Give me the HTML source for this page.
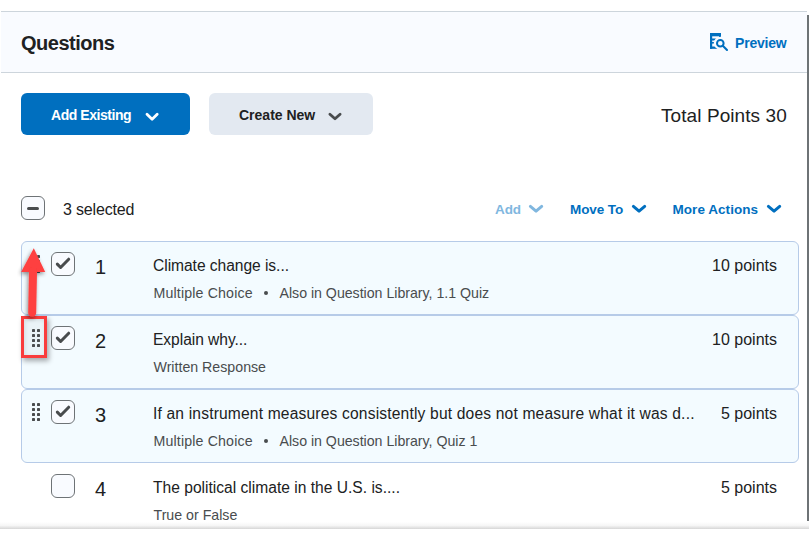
<!DOCTYPE html>
<html><head><meta charset="utf-8"><style>
*{margin:0;padding:0;box-sizing:border-box}
html,body{width:809px;height:536px;overflow:hidden;background:#fff;font-family:"Liberation Sans",sans-serif;color:#202122}
.a{position:absolute;display:block}
.t{position:absolute;white-space:nowrap;line-height:1}
.cb{position:absolute;width:24px;height:24px;border:1.5px solid #6e7376;border-radius:6px;background:#f9fbff}
.card{position:absolute;left:21px;width:778px;height:74px;background:#f3fbff;border:1px solid #b6cbe8;border-radius:6px}
</style></head><body>
<div class="a" style="left:1px;top:11px;width:806px;height:62px;background:#f9fbff;border-top:1px solid #cdd5dc;border-bottom:1px solid #cdd5dc"></div>
<div class="t" style="left:21px;top:32.57px;font-size:20px;font-weight:bold;color:#202122;letter-spacing:-0.5px;">Questions</div>
<svg class="a" style="left:706px;top:30px" width="26" height="24" viewBox="0 0 26 24">
<defs><mask id="m"><rect width="26" height="24" fill="#fff"/><circle cx="14.3" cy="13.2" r="6.5" fill="#000"/></mask></defs>
<g fill="#006fbf" mask="url(#m)">
<rect x="4" y="3" width="2.2" height="15.8"/><rect x="4" y="3" width="11" height="3.3"/><rect x="13" y="3" width="2" height="4"/>
<rect x="4" y="8.5" width="8" height="2"/><rect x="4" y="12" width="6" height="1.6"/><rect x="4" y="16.5" width="8" height="2.3"/>
</g>
<circle cx="14.3" cy="13.2" r="3.3" fill="none" stroke="#006fbf" stroke-width="2"/>
<path d="M16.8 15.8L21 20" stroke="#006fbf" stroke-width="2.1" stroke-linecap="round"/>
</svg>
<div class="t" style="left:735px;top:36.15px;font-size:14px;font-weight:bold;color:#006fbf;letter-spacing:-0.2px;">Preview</div>
<div class="a" style="left:807px;top:15px;width:2px;height:506px;background:#6e7376"></div>
<div class="a" style="left:21px;top:93px;width:169px;height:42px;background:#006fbf;border-radius:6px"></div>
<div class="t" style="left:51px;top:108.15px;font-size:14px;font-weight:bold;color:#ffffff;letter-spacing:-0.45px;">Add Existing</div>
<svg class="a" style="left:143px;top:110px" width="19" height="13" viewBox="0 0 19 13"><path d="M4.00 4.30L9.10 9.20L14.20 4.30" fill="none" stroke="#ffffff" stroke-width="2.8" stroke-linecap="round" stroke-linejoin="round"/></svg>
<div class="a" style="left:209px;top:93px;width:164px;height:42px;background:#e3e9f1;border-radius:6px"></div>
<div class="t" style="left:239px;top:108.15px;font-size:14px;font-weight:bold;color:#202122;letter-spacing:0px;">Create New</div>
<svg class="a" style="left:325px;top:110px" width="19" height="13" viewBox="0 0 19 13"><path d="M4.90 4.20L10.00 8.80L15.10 4.20" fill="none" stroke="#494c4e" stroke-width="2.8" stroke-linecap="round" stroke-linejoin="round"/></svg>
<div class="t" style="left:661px;top:105.62px;font-size:19px;font-weight:normal;color:#202122;letter-spacing:0.08px;">Total Points 30</div>
<div class="cb" style="left:21px;top:196px"></div>
<div class="a" style="left:27px;top:207px;width:12px;height:3px;border-radius:1.5px;background:#494c4e"></div>
<div class="t" style="left:63px;top:202.26px;font-size:16px;font-weight:normal;color:#202122;letter-spacing:-0.17px;">3 selected</div>
<div class="t" style="left:495px;top:202.87px;font-size:13.5px;font-weight:bold;color:#80b7df;letter-spacing:-0.1px;">Add</div>
<svg class="a" style="left:526px;top:202px" width="20" height="13" viewBox="0 0 20 13"><path d="M4.40 4.40L10.05 9.10L15.70 4.40" fill="none" stroke="#80b7df" stroke-width="3" stroke-linecap="round" stroke-linejoin="round"/></svg>
<div class="t" style="left:570px;top:202.87px;font-size:13.5px;font-weight:bold;color:#006fbf;letter-spacing:-0.1px;">Move To</div>
<svg class="a" style="left:629px;top:202px" width="20" height="13" viewBox="0 0 20 13"><path d="M4.40 4.40L10.05 9.10L15.70 4.40" fill="none" stroke="#006fbf" stroke-width="3" stroke-linecap="round" stroke-linejoin="round"/></svg>
<div class="t" style="left:672.5px;top:202.87px;font-size:13.5px;font-weight:bold;color:#006fbf;letter-spacing:0.05px;">More Actions</div>
<svg class="a" style="left:764px;top:202px" width="20" height="13" viewBox="0 0 20 13"><path d="M4.40 4.40L10.05 9.10L15.70 4.40" fill="none" stroke="#006fbf" stroke-width="3" stroke-linecap="round" stroke-linejoin="round"/></svg>
<div class="card" style="top:241px"></div>
<div class="card" style="top:315px"></div>
<div class="card" style="top:389px"></div>
<div class="cb" style="left:51px;top:252px"></div><svg class="a" style="left:51px;top:252px" width="24" height="24" viewBox="0 0 24 24"><path d="M6.3 12.1L9.6 15.5L17.7 7.2" fill="none" stroke="#494c4e" stroke-width="3" stroke-linecap="round" stroke-linejoin="round"/></svg>
<div class="t" style="left:95px;top:257.27px;font-size:20px;font-weight:normal;color:#202122;letter-spacing:0px;">1</div>
<div class="t" style="left:153px;top:257.79px;font-size:15.6px;font-weight:normal;color:#202122;letter-spacing:-0.05px;">Climate change is...</div>
<div class="t" style="left:153.5px;top:285.68px;font-size:14.2px;font-weight:normal;color:#494c4e;letter-spacing:0.15px;">Multiple Choice</div>
<div class="a" style="left:263.5px;top:290.5px;width:4.5px;height:4.5px;border-radius:50%;background:#494c4e"></div>
<div class="t" style="left:279.5px;top:285.68px;font-size:14.2px;font-weight:normal;color:#494c4e;letter-spacing:-0.02px;">Also in Question Library, 1.1 Quiz</div>
<div class="t" style="right:32px;top:258.26px;font-size:16px;color:#202122">10 points</div>
<div class="cb" style="left:51px;top:326px"></div><svg class="a" style="left:51px;top:326px" width="24" height="24" viewBox="0 0 24 24"><path d="M6.3 12.1L9.6 15.5L17.7 7.2" fill="none" stroke="#494c4e" stroke-width="3" stroke-linecap="round" stroke-linejoin="round"/></svg>
<div class="t" style="left:95px;top:331.27px;font-size:20px;font-weight:normal;color:#202122;letter-spacing:0px;">2</div>
<div class="t" style="left:153px;top:331.79px;font-size:15.6px;font-weight:normal;color:#202122;letter-spacing:-0.05px;">Explain why...</div>
<div class="t" style="left:153.5px;top:359.68px;font-size:14.2px;font-weight:normal;color:#494c4e;letter-spacing:0px;">Written Response</div>
<div class="t" style="right:32px;top:332.26px;font-size:16px;color:#202122">10 points</div>
<div class="cb" style="left:51px;top:400px"></div><svg class="a" style="left:51px;top:400px" width="24" height="24" viewBox="0 0 24 24"><path d="M6.3 12.1L9.6 15.5L17.7 7.2" fill="none" stroke="#494c4e" stroke-width="3" stroke-linecap="round" stroke-linejoin="round"/></svg>
<div class="t" style="left:95px;top:405.27px;font-size:20px;font-weight:normal;color:#202122;letter-spacing:0px;">3</div>
<div class="t" style="left:153px;top:405.79px;font-size:15.6px;font-weight:normal;color:#202122;letter-spacing:0.17px;">If an instrument measures consistently but does not measure what it was d...</div>
<div class="t" style="left:153.5px;top:433.68px;font-size:14.2px;font-weight:normal;color:#494c4e;letter-spacing:0.15px;">Multiple Choice</div>
<div class="a" style="left:263.5px;top:438.5px;width:4.5px;height:4.5px;border-radius:50%;background:#494c4e"></div>
<div class="t" style="left:279.5px;top:433.68px;font-size:14.2px;font-weight:normal;color:#494c4e;letter-spacing:-0.02px;">Also in Question Library, Quiz 1</div>
<div class="t" style="right:32px;top:406.26px;font-size:16px;color:#202122">5 points</div>
<div class="cb" style="left:51px;top:474px"></div>
<div class="t" style="left:95px;top:479.27px;font-size:20px;font-weight:normal;color:#202122;letter-spacing:0px;">4</div>
<div class="t" style="left:153px;top:479.79px;font-size:15.6px;font-weight:normal;color:#202122;letter-spacing:0.0px;">The political climate in the U.S. is....</div>
<div class="t" style="left:153.5px;top:507.68px;font-size:14.2px;font-weight:normal;color:#494c4e;letter-spacing:0px;">True or False</div>
<div class="t" style="right:32px;top:480.26px;font-size:16px;color:#202122">5 points</div>
<div class="a" style="left:21px;top:316px;width:26px;height:42px;border:3px solid #f93c3c;box-shadow:2px 3px 5px rgba(0,0,0,.33), inset 1px 1px 4px rgba(0,0,0,.10);background:rgba(215,225,228,.30)"></div>
<svg class="a" style="left:32px;top:255px" width="8" height="18" viewBox="0 0 8 18" fill="#494c4e"><rect x="0" y="0" width="3" height="3" rx="0.4"/><rect x="5" y="0" width="3" height="3" rx="0.4"/><rect x="0" y="5" width="3" height="3" rx="0.4"/><rect x="5" y="5" width="3" height="3" rx="0.4"/><rect x="0" y="10" width="3" height="3" rx="0.4"/><rect x="5" y="10" width="3" height="3" rx="0.4"/><rect x="0" y="15" width="3" height="3" rx="0.4"/><rect x="5" y="15" width="3" height="3" rx="0.4"/></svg>
<svg class="a" style="left:32px;top:329px" width="8" height="18" viewBox="0 0 8 18" fill="#494c4e"><rect x="0" y="0" width="3" height="3" rx="0.4"/><rect x="5" y="0" width="3" height="3" rx="0.4"/><rect x="0" y="5" width="3" height="3" rx="0.4"/><rect x="5" y="5" width="3" height="3" rx="0.4"/><rect x="0" y="10" width="3" height="3" rx="0.4"/><rect x="5" y="10" width="3" height="3" rx="0.4"/><rect x="0" y="15" width="3" height="3" rx="0.4"/><rect x="5" y="15" width="3" height="3" rx="0.4"/></svg>
<svg class="a" style="left:32px;top:403px" width="8" height="18" viewBox="0 0 8 18" fill="#494c4e"><rect x="0" y="0" width="3" height="3" rx="0.4"/><rect x="5" y="0" width="3" height="3" rx="0.4"/><rect x="0" y="5" width="3" height="3" rx="0.4"/><rect x="5" y="5" width="3" height="3" rx="0.4"/><rect x="0" y="10" width="3" height="3" rx="0.4"/><rect x="5" y="10" width="3" height="3" rx="0.4"/><rect x="0" y="15" width="3" height="3" rx="0.4"/><rect x="5" y="15" width="3" height="3" rx="0.4"/></svg>
<svg class="a" style="left:10px;top:240px;overflow:visible" width="50" height="90" viewBox="0 0 50 90">
<defs><filter id="sh" x="-50%" y="-20%" width="200%" height="150%"><feGaussianBlur in="SourceAlpha" stdDeviation="2.2"/><feOffset dx="-1" dy="2"/><feComponentTransfer><feFuncA type="linear" slope="0.45"/></feComponentTransfer><feMerge><feMergeNode/><feMergeNode in="SourceGraphic"/></feMerge></filter></defs>
<g filter="url(#sh)">
<path d="M23.8 8.2L35.2 32.1H11.1Z" fill="#fe3f3f"/>
<path d="M23 31L22.2 72.5" stroke="#fe3f3f" stroke-width="8" stroke-linecap="round"/>
</g></svg>
<div class="a" style="left:0;top:522px;width:809px;height:7px;background:linear-gradient(#ffffff,#f6f6f6 50%,#d6d6d6)"></div>
</body></html>
